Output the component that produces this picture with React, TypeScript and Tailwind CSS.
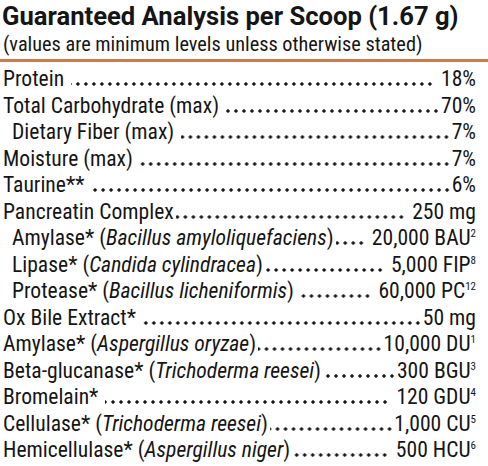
import type { ReactNode } from 'react';

type Row = {
  label: ReactNode;
  value: string;
  sup?: string;
  indent?: boolean;
  gapL?: boolean;
  gapR?: boolean;
};

const rows: Row[] = [
  { label: 'Protein', value: '18%', gapL: true, gapR: true },
  { label: 'Total Carbohydrate (max)', value: '70%', gapL: true },
  { label: 'Dietary Fiber (max)', value: '7%', indent: true, gapL: true },
  { label: 'Moisture (max)', value: '7%', gapL: true },
  { label: 'Taurine**', value: '6%', gapL: true },
  { label: 'Pancreatin Complex', value: '250 mg', gapR: true },
  {
    label: <>Amylase* (<i>Bacillus amyloliquefaciens</i>)</>,
    value: '20,000 BAU',
    sup: '2',
    indent: true,
    gapR: true,
  },
  { label: <>Lipase* (<i>Candida cylindracea</i>)</>, value: '5,000 FIP', sup: '8', indent: true, gapR: true },
  {
    label: <>Protease* (<i>Bacillus licheniformis</i>)</>,
    value: '60,000 PC',
    sup: '12',
    indent: true,
    gapL: true,
    gapR: true,
  },
  { label: 'Ox Bile Extract*', value: '50 mg', gapL: true },
  { label: <>Amylase* (<i>Aspergillus oryzae</i>)</>, value: '10,000 DU', sup: '1' },
  { label: <>Beta-glucanase* (<i>Trichoderma reesei</i>)</>, value: '300 BGU', sup: '3' },
  { label: 'Bromelain*', value: '120 GDU', sup: '4', gapL: true, gapR: true },
  { label: <>Cellulase* (<i>Trichoderma reesei</i>)</>, value: '1,000 CU', sup: '5' },
  { label: <>Hemicellulase* (<i>Aspergillus niger</i>)</>, value: '500 HCU', sup: '6', gapR: true },
];

export default function App() {
  return (
    <div
      className="w-[488px] h-[466px] bg-white text-[#151515] overflow-hidden"
      style={{ fontFamily: '"Roboto Condensed", "Liberation Sans Narrow", "DejaVu Sans Condensed", sans-serif' }}
    >
      <div className="pl-[2px] pr-[12px]">
        <h1 className="font-['Roboto',sans-serif] text-[25.6px] leading-[32px] font-bold whitespace-nowrap">
          Guaranteed Analysis per Scoop (1.67 g)
        </h1>
        <p className="pl-[1px] text-[20.3px] leading-[24px]">(values are minimum levels unless otherwise stated)</p>
      </div>
      <div className="mt-[3px] h-[3px] bg-[#c97c50]" />

      <div className="mt-[4px] pl-[3px] pr-[12px] text-[21.6px] leading-[26.5px]">
        {rows.map((r, i) => (
          <div key={i} className="flex items-baseline">
            <span className={`shrink-0 whitespace-nowrap ${r.indent ? 'pl-[9px]' : ''}`}>{r.label}</span>
            {/* dot leader */}
            <span
              className={`flex-1 h-[4px] bg-[radial-gradient(circle,#151515_1.4px,transparent_1.9px)] bg-[length:8px_4px] bg-repeat-x bg-right ${
                r.gapL ? 'ml-[7px]' : 'ml-[2px]'
              } ${r.gapR ? 'mr-[7px]' : 'mr-[1px]'}`}
            />
            <span className="shrink-0 whitespace-nowrap">
              {r.value}
              {r.sup && <sup className="text-[11px] relative top-[-8px]">{r.sup}</sup>}
            </span>
          </div>
        ))}
      </div>
    </div>
  );
}
